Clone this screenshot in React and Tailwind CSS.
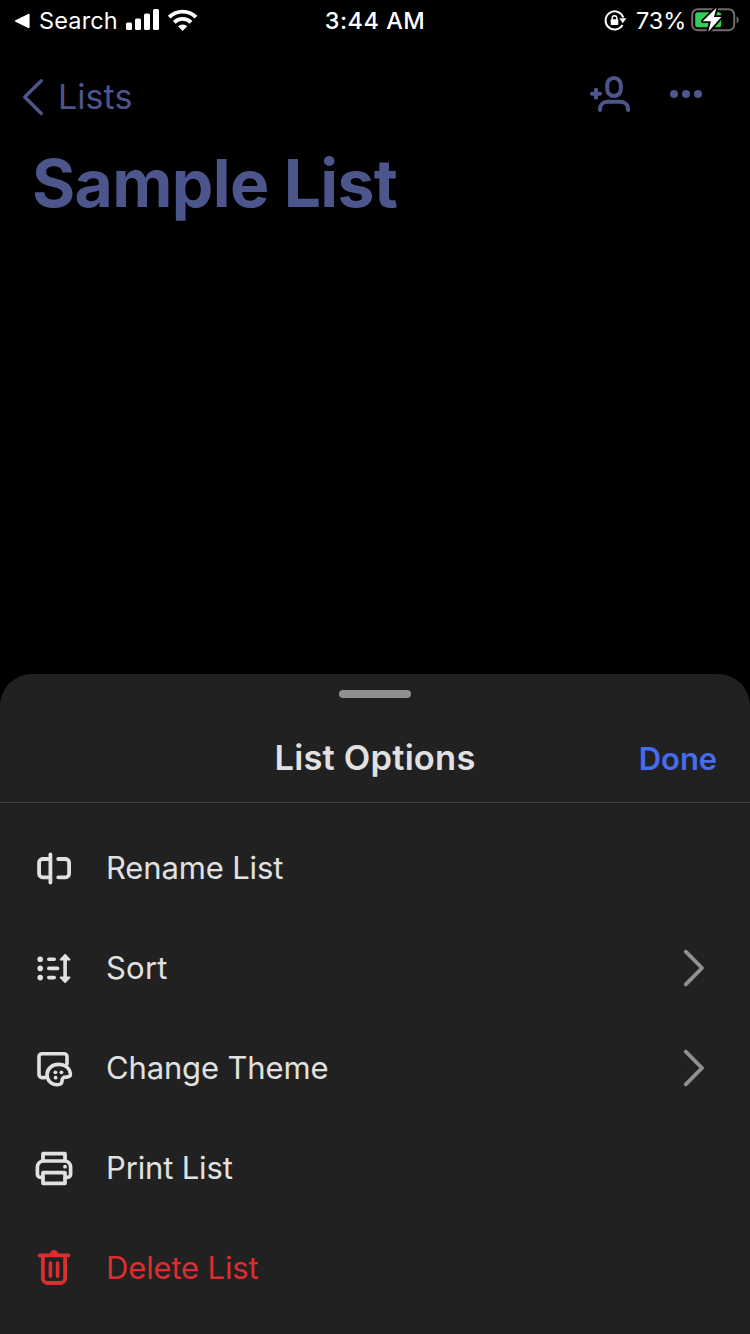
import React from "react";

function StatusBar() {
  return (
    <header className="flex h-10 w-full items-center text-white">
      <div className="flex flex-1 items-center pl-[14px]">
        <svg width="18" height="40" viewBox="14 0 18 40" fill="currentColor">
          <path d="M15.4 20.3 28.2 13.9q1.4-.5 1.4 .9v12.2q0 1.4-1.4 .9L15.4 21.7q-1-.7 0-1.4Z" />
        </svg>
        <span className="ml-[7px] mt-[2px] w-[79px] whitespace-nowrap text-[23.5px] leading-[38px] tracking-[0.15px]">Search</span>
        <svg className="ml-[6px]" width="76" height="40" viewBox="124 0 76 40" fill="currentColor">
          <rect x="126" y="22.5" width="6" height="7.5" rx="1.5" />
          <rect x="135" y="18.5" width="6" height="11.5" rx="1.5" />
          <rect x="144" y="13.5" width="6" height="16.5" rx="1.5" />
          <rect x="153" y="9" width="6" height="21" rx="1.5" />
          <g fill="none" stroke="currentColor" strokeWidth="3.9">
            <path d="M169.2 17.2a19 19 0 0 1 26.8 0" />
            <path d="M174.2 22.4a11.8 11.8 0 0 1 16.8 0" />
          </g>
          <path d="M178 26.3a6.6 6.6 0 0 1 9.2 0L182.6 31Z" />
        </svg>
      </div>
      <span className="mr-[4px] mt-[2px] whitespace-nowrap text-[23.5px] font-medium leading-[38px] tracking-[0.5px]">3:44 AM</span>
      <div className="flex flex-1 items-center justify-end pr-[10px]">
        <svg width="26" height="40" viewBox="602 0 26 40" fill="none">
          <path d="M623.3 17.5a9.1 9.1 0 1 0-.8 7.6" stroke="white" strokeWidth="2" />
          <path d="M619.2 18.3h7.2l-3.6 5Z" fill="white" />
          <rect x="610.7" y="19.2" width="7.6" height="5.8" rx="1" fill="white" />
          <path d="M612.2 20v-2a2.3 2.3 0 0 1 4.6 0v2" stroke="white" strokeWidth="1.4" />
        </svg>
        <span className="ml-[8px] mt-[2px] w-[50px] whitespace-nowrap text-[23.5px] leading-[38px] tracking-[-0.1px]">73%</span>
        <svg className="ml-[4px]" width="50" height="40" viewBox="690 0 50 40">
          <rect x="692.2" y="9.2" width="42" height="21" rx="5.5" fill="none" stroke="#6d6d6d" strokeWidth="2" />
          <path d="M736.6 16.2q2.2 1 2.2 3.6t-2.2 3.6Z" fill="#6d6d6d" />
          <rect x="695.2" y="12.2" width="26" height="15" rx="2.5" fill="#33ce5a" />
          <path d="M716.5 7.8 702.7 21.2h8.2l-2.6 10.5L721.3 17h-7.4Z" fill="white" stroke="black" strokeWidth="3.6" paintOrder="stroke" strokeLinejoin="round" />
        </svg>
      </div>
    </header>
  );
}

function NavBar() {
  return (
    <nav className="flex h-[100px] items-center justify-between text-[#4c558c]">
      <a className="flex items-center pl-[20px]">
        <svg width="26" height="44" viewBox="20 75 26 44" fill="none" stroke="currentColor" strokeWidth="3.4" strokeLinecap="round" strokeLinejoin="round">
          <path d="M41.3 80.7 24.7 97l16.6 16.5" />
        </svg>
        <span className="ml-[12px] mt-[14px] h-[44px] whitespace-nowrap text-[34px] leading-[30px] tracking-[0.05px]">Lists</span>
      </a>
      <div className="mb-[6px] flex items-center pr-[44px]">
        <svg width="42" height="42" viewBox="589 73 42 42" fill="none" stroke="currentColor" strokeWidth="4" strokeLinecap="round">
          <path d="M592 93.8h8M596 89.8v8" />
          <rect x="607.2" y="78" width="13.6" height="18" rx="6.8" />
          <path d="M600 110v-.8c0-4.8 3.6-7.4 8-7.4h12c4.4 0 8 2.6 8 7.4v.8" />
        </svg>
        <svg className="ml-[37px]" width="38" height="42" viewBox="668 73 38 42" fill="currentColor">
          <circle cx="674" cy="94" r="4" />
          <circle cx="686" cy="94" r="4" />
          <circle cx="698" cy="94" r="4" />
        </svg>
      </div>
    </nav>
  );
}

function RenameIcon() {
  return (
    <svg width="40" height="40" viewBox="0 0 40 40" fill="none" stroke="currentColor" strokeWidth="3.8" strokeLinecap="round">
      <path d="M16.4 6.5v28" />
      <path d="M16 11H8.6a3.5 3.5 0 0 0-3.5 3.500v11.300a3.500 3.500 0 0 0 3.500 3.500H16" />
      <path d="M24.200 11h7.400a3.500 3.500 0 0 1 3.500 3.500v11.300a3.500 3.500 0 0 1-3.500 3.500h-7.400" />
    </svg>
  );
}

function SortIcon() {
  return (
    <svg width="40" height="40" viewBox="0 0 40 40" fill="currentColor">
      <circle cx="6.2" cy="11.2" r="2.8" />
      <circle cx="6.2" cy="20.4" r="2.8" />
      <circle cx="6.2" cy="29.6" r="2.8" />
      <g stroke="currentColor" strokeWidth="3.6" strokeLinecap="round">
        <path d="M14.8 11.2h5.400M14.800 20.400h8.800M14.800 29.600h5.400M31.100 11v19" />
      </g>
      <path d="M31.100 6.800l4.500 4.800h-9ZM31.100 34.200l4.500-4.800h-9Z" stroke="currentColor" strokeWidth="1.8" strokeLinejoin="round" />
    </svg>
  );
}

function ThemeIcon() {
  return (
    <svg width="40" height="40" viewBox="0 0 40 40" fill="none" stroke="currentColor" strokeWidth="3.6" strokeLinecap="round" strokeLinejoin="round">
      <path d="M11 29.600H8a3 3 0 0 1-3-3V8.700a3 3 0 0 1 3-3h22a3 3 0 0 1 3 3V16" />
      <path d="M25 16.400C18 16.400 13 20.600 13 26.700c0 6 4.700 10 10.400 10 3.400 0 4.600-1 4.600-3.600 0-3.200 1.200-4 4.300-4 3.200 0 4.400-1.200 4.100-3.300C35.600 20 31 16.400 25 16.400Z" />
      <g fill="currentColor" stroke="none">
        <circle cx="21.400" cy="24.300" r="1.900" />
        <circle cx="27.400" cy="24.300" r="1.900" />
        <circle cx="21.600" cy="29.700" r="1.900" />
      </g>
    </svg>
  );
}

function PrintIcon() {
  return (
    <svg width="40" height="40" viewBox="0 0 40 40" fill="none" stroke="currentColor" strokeWidth="3.7" strokeLinecap="round" strokeLinejoin="round">
      <path d="M9 12.500V5.700h22v6.800" />
      <path d="M8.500 29.400H6.600a3.200 3.200 0 0 1-3.200-3.200V19a6 6 0 0 1 6-6h21.200a6 6 0 0 1 6 6v7.200a3.200 3.200 0 0 1-3.200 3.200h-1.900" />
      <path d="M9 24.700h22v10.600H9Z" />
      <circle cx="31" cy="18.700" r="1.900" fill="currentColor" stroke="none" />
    </svg>
  );
}

function TrashIcon() {
  return (
    <svg width="40" height="40" viewBox="0 0 40 40" fill="none" stroke="currentColor" strokeWidth="3.8" strokeLinecap="round" strokeLinejoin="round">
      <path d="M5.600 7.400h28.800" />
      <path d="M15.800 7c0-3 1.800-4.900 4.200-4.900S24.200 4 24.200 7Z" fill="currentColor" stroke="none" />
      <path d="M8.900 8v22.700a4.300 4.300 0 0 0 4.300 4.300h13.600a4.300 4.300 0 0 0 4.300-4.300V8" />
      <path d="M16.400 15v13.200M23.600 15v13.200" strokeWidth="3.6" />
    </svg>
  );
}

const options = [
  { label: "Rename List", Icon: RenameIcon },
  { label: "Sort", Icon: SortIcon, more: true },
  { label: "Change Theme", Icon: ThemeIcon, more: true },
  { label: "Print List", Icon: PrintIcon },
  { label: "Delete List", Icon: TrashIcon, danger: true },
];

function OptionRow({ label, Icon, more, danger }) {
  return (
    <li className={danger ? "flex h-[100px] items-center pl-[34px] pr-[43px] text-[#dc2e30]" : "flex h-[100px] items-center pl-[34px] pr-[43px] text-[#e1e1e1]"}>
      <Icon />
      <span className={`ml-[32px] flex-1 whitespace-nowrap text-[31px] leading-[40px] ${label === "Sort" ? "tracking-[0.2px]" : "tracking-[-0.15px]"}`}>{label}</span>
      {more && (
        <svg width="26" height="40" viewBox="0 0 26 40" fill="none" stroke="#919191" strokeWidth="3.9" strokeLinecap="round" strokeLinejoin="round">
          <path d="M4.800 3.700 21 20 4.800 36.300" />
        </svg>
      )}
    </li>
  );
}

export default function App() {
  return (
    <div className="flex h-[1334px] w-[750px] flex-col overflow-hidden bg-black font-['Inter',sans-serif]">
      <StatusBar />
      <div className="mt-[7px]">
        <NavBar />
      </div>
      <h1 className="-mt-[4px] ml-[32px] whitespace-nowrap text-[66px] font-bold leading-[80px] tracking-[-0.65px] text-[#4c558c]">Sample List</h1>
      <section className="mt-auto flex h-[660px] flex-col rounded-t-[32px] bg-[#212121]">
        <div className="mx-auto mt-4 h-2 w-[72px] rounded-full bg-[#919191]" />
        <div className="grid h-[105px] grid-cols-[1fr_auto_1fr] items-center border-b border-[#404040]">
          <span />
          <h2 className="mt-[16px] whitespace-nowrap text-[34.5px] font-[560] leading-[40px] tracking-[0.2px] text-[#e1e1e1]">List Options</h2>
          <button className="mt-[18px] justify-self-end whitespace-nowrap pr-[33px] text-[31px] font-[560] leading-[40px] tracking-[-0.1px] text-[#466bf0]">Done</button>
        </div>
        <ul className="mt-[15px]">
          {options.map((option) => (
            <OptionRow key={option.label} {...option} />
          ))}
        </ul>
      </section>
    </div>
  );
}
